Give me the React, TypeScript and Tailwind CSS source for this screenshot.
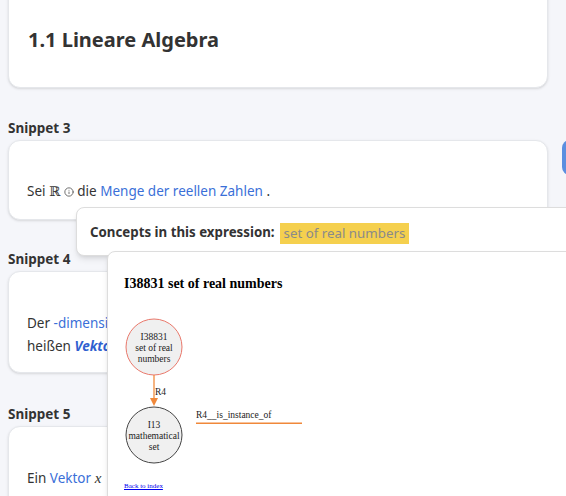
import { Info } from "lucide-react"

const sans = { fontFamily: '"Noto Sans", "Open Sans", sans-serif' }

function Label({ children }: { children: string }) {
  return <div className="mb-[2px] text-[13.5px] font-bold leading-5 text-[#333]">{children}</div>
}

function Graph() {
  return (
    <svg width="200" height="170" viewBox="0 0 200 170" className="block" style={{ fontFamily: '"Liberation Serif", serif' }}>
      <circle cx="30" cy="46" r="28" fill="#f0f0f0" stroke="#e9786b" strokeWidth="1" />
      <text x="30" y="39.3" fontSize="9.5" textAnchor="middle" fill="#222">I38831</text>
      <text x="30" y="50.3" fontSize="9.5" textAnchor="middle" fill="#222">set of real</text>
      <text x="30" y="61.3" fontSize="9.5" textAnchor="middle" fill="#222">numbers</text>
      <line x1="30" y1="74" x2="30" y2="98" stroke="#f0883a" strokeOpacity="0.8" strokeWidth="1.6" />
      <polygon points="26,97 34,97 30,105" fill="#f0883a" />
      <text x="31" y="94" fontSize="9.5" fill="#222">R4</text>
      <circle cx="30" cy="134" r="28" fill="#f0f0f0" stroke="#444" strokeWidth="1" />
      <text x="30" y="126.6" fontSize="9.5" textAnchor="middle" fill="#222">I13</text>
      <text x="30" y="137.6" fontSize="9.5" textAnchor="middle" fill="#222">mathematical</text>
      <text x="30" y="148.6" fontSize="9.5" textAnchor="middle" fill="#222">set</text>
      <text x="72" y="117" fontSize="9.5" fill="#222">R4__is_instance_of</text>
      <line x1="72" y1="122.3" x2="178" y2="122.3" stroke="#f0883a" strokeWidth="1.5" />
    </svg>
  )
}

export default function App() {
  return (
    <div className="relative h-[496px] w-[566px] overflow-hidden bg-[#f5f6fa] text-[#333]" style={sans}>
      <div className="px-2">
        <div className="-mt-[20px] w-[540px] rounded-xl border border-[#e5e7eb] bg-white pb-[31px] pl-[19px] pt-[43px] shadow-sm">
          <h1 className="text-[20px] font-bold leading-8 text-[#333]">1.1 Lineare Algebra</h1>
        </div>

        <div className="mt-[30px]">
          <Label>Snippet 3</Label>
          <div className="flex gap-[14px]">
            <div className="w-[540px] shrink-0 rounded-xl border border-[#e5e7eb] bg-white pb-[16px] pl-[18px] pt-[38px] text-[13.5px] leading-6 shadow-sm">
              Sei <span style={{ fontFamily: '"DejaVu Serif", serif' }}>ℝ</span>{" "}
              <Info className="inline size-[10px] align-[-1px] text-[#555]" strokeWidth={2} /> die{" "}
              <span className="text-[#3a6fd8]">Menge der reellen Zahlen</span> .
            </div>
            <div className="h-[35px] w-[36px] shrink-0 rounded-lg bg-[#5b8fe0]" />
          </div>
        </div>

        <div className="mt-[29px]">
          <Label>Snippet 4</Label>
          <div className="w-[540px] rounded-xl border border-[#e5e7eb] bg-white pb-[14px] pl-[18px] pt-[40px] text-[13.5px] leading-[23px] shadow-sm">
            <div>
              Der <span className="text-[#3a6fd8]">-dimensionale Raum ℝ</span>
            </div>
            <div>
              heißen <span className="font-bold italic text-[#2f5fd0]">Vektoren</span>
            </div>
          </div>
        </div>

        <div className="mt-[31px]">
          <Label>Snippet 5</Label>
          <div className="h-[100px] w-[540px] rounded-xl border border-[#e5e7eb] bg-white pl-[18px] pt-[39px] text-[13.5px] leading-6 shadow-sm">
            Ein <span className="text-[#3a6fd8]">Vektor</span>{" "}
            <span className="text-[15px] italic" style={{ fontFamily: '"Liberation Serif", serif' }}>x</span>
          </div>
        </div>
      </div>

      <div className="absolute left-[76px] top-[207px] flex h-[49px] w-[520px] items-center rounded-lg border border-[#ddd] bg-white pl-[13px] pt-[3px] shadow-md">
        <span className="text-[13.3px] font-bold text-[#333]">Concepts in this expression:</span>
        <span className="ml-[5px] bg-[#f5d04e] px-[4px] text-[13.3px] leading-[21px] text-[#8a8a8a]">set of real numbers</span>
      </div>

      <div
        className="absolute left-[107px] top-[251px] h-[300px] w-[500px] rounded-lg border border-[#ddd] bg-white pl-[16px] pt-[22px] shadow-md"
        style={{ fontFamily: '"Liberation Serif", serif' }}
      >
        <div className="text-[14px] font-bold leading-5 text-black">I38831 set of real numbers</div>
        <div className="mt-[7px]">
          <Graph />
        </div>
        <a href="#" className="mt-[10px] block text-[7px] leading-[10px] text-[#0000ee] underline">
          Back to index
        </a>
      </div>
    </div>
  )
}
